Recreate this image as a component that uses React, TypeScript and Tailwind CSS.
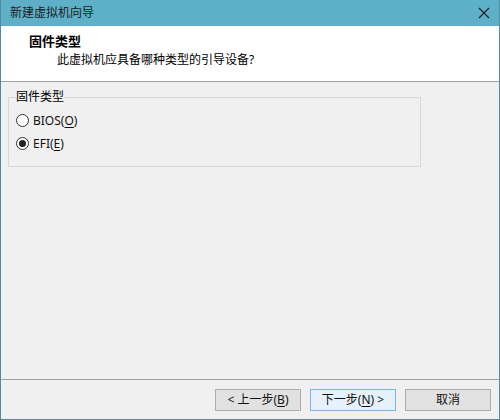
const font = { fontFamily: '"Noto Sans", "Noto Sans CJK SC", sans-serif' };

const Radio = ({ label, hotkey, checked }: { label: string; hotkey: string; checked?: boolean }) => (
  <label className="flex h-[23px] items-center gap-[4px]">
    <span className="flex h-[13px] w-[13px] items-center justify-center rounded-full border border-[#333333] bg-white">
      {checked && <span className="h-[7px] w-[7px] rounded-full bg-[#222222]" />}
    </span>
    <span className="text-[12px] leading-[16px] text-[#111]">
      {label}(<span className="underline underline-offset-2">{hotkey}</span>)
    </span>
  </label>
);

const Button = ({ children, active }: { children: React.ReactNode; active?: boolean }) => (
  <button
    className={
      active
        ? "flex h-[22px] w-[86px] items-center justify-center border border-[#7eb4ea] bg-[#e5f1fb] text-[12px] text-[#111]"
        : "flex h-[22px] w-[86px] items-center justify-center border border-[#adadad] bg-[#e1e1e1] text-[12px] text-[#111]"
    }
  >
    {children}
  </button>
);

export default function App() {
  return (
    <div
      style={font}
      className="flex h-[420px] w-[500px] flex-col border-x border-b border-[#4f8ca4] bg-[#f0f0f0]"
    >
      <div className="flex h-[26px] shrink-0 items-center justify-between bg-[#5eb0c8] pl-[9px] pr-[9px]">
        <span className="text-[12px] leading-[16px] text-[#1b1b1b]">新建虚拟机向导</span>
        <svg width="12" height="12" viewBox="0 0 12 12" className="mr-[0px]">
          <path d="M1 1 L11 11 M11 1 L1 11" stroke="#1a1a1a" strokeWidth="1.1" />
        </svg>
      </div>

      <div className="flex h-[56px] shrink-0 flex-col border-b border-[#a0a0a0] bg-white pl-[28px] pt-[7px]">
        <div className="text-[13px] font-bold leading-[17px] text-black">固件类型</div>
        <div className="ml-[28px] mt-[2px] text-[12px] leading-[16px] text-black">
          此虚拟机应具备哪种类型的引导设备?
        </div>
      </div>

      <div className="flex-1">
        <fieldset className="ml-[7px] mt-[7px] h-[78px] w-[413px] border border-[#d9d9d9] px-[7px]">
          <legend className="text-[12px] leading-[16px] text-black">固件类型</legend>
          <div className="flex flex-col pt-[4px]">
            <Radio label="BIOS" hotkey="O" />
            <Radio label="EFI" hotkey="E" checked />
          </div>
        </fieldset>
      </div>

      <div className="flex h-[40px] shrink-0 justify-end gap-[9px] border-t border-[#a0a0a0] pr-[8px] pt-[9px]">
        <Button>
          &lt; 上一步(<span className="underline underline-offset-2">B</span>)
        </Button>
        <Button active>
          下一步(<span className="underline underline-offset-2">N</span>) &gt;
        </Button>
        <Button>取消</Button>
      </div>
    </div>
  );
}
